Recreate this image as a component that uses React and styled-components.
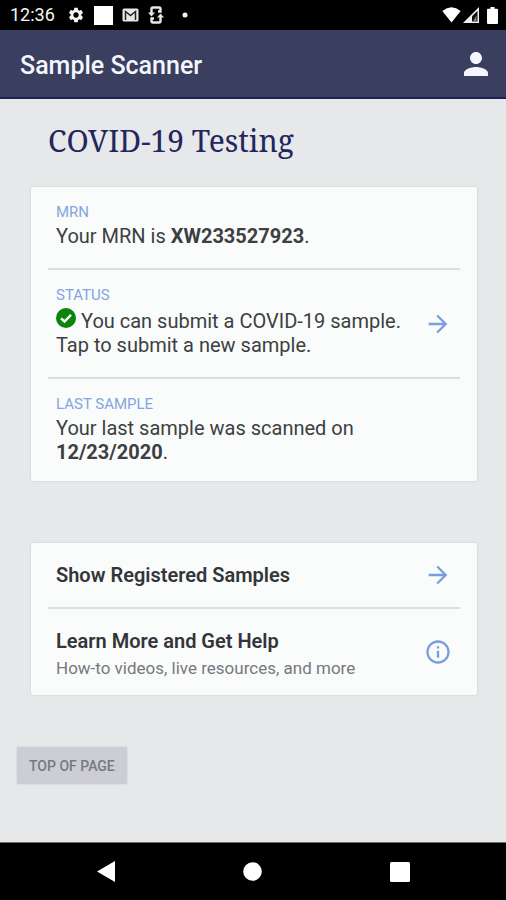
import React from 'react'
import styled, { createGlobalStyle } from 'styled-components'
import {
  MdSettings,
  MdPerson,
  MdArrowForward,
  MdInfoOutline,
} from 'react-icons/md'

const GlobalStyle = createGlobalStyle`
  * {
    box-sizing: border-box;
  }
  body {
    margin: 0;
    background: #e6e8ea;
    font-family: Roboto, "Liberation Sans", sans-serif;
  }
  h1, h2, h3, p {
    margin: 0;
  }
`;

const Screen = styled.div`
  display: flex;
  flex-direction: column;
  min-height: 100vh;
  background: #e6e8ea;
`;

const StatusBar = styled.div`
  display: flex;
  justify-content: space-between;
  align-items: center;
  height: 30px;
  padding: 0 8px 0 10px;
  background: #000;
  color: #f5f5f5;
`;

const StatusGroup = styled.div`
  display: flex;
  align-items: center;
  gap: ${(props) => props.$gap};
  svg {
    display: block;
  }
`;

const Clock = styled.span`
  margin-right: 3px;
  font-size: 18px;
  line-height: 30px;
`;

const Header = styled.header`
  display: flex;
  justify-content: space-between;
  align-items: center;
  height: 69px;
  padding: 0 12px 0 20px;
  background: #3a3f5f;
  border-bottom: 2px solid #1c2159;
  color: #f3f6fc;
`;

const AppName = styled.h1`
  padding-top: 4px;
  font-size: 25px;
  font-weight: 500;
  line-height: 32px;
`;

const IconButton = styled.button`
  display: flex;
  padding: 0;
  border: 0;
  background: none;
  color: inherit;
  font-size: 36px;
  cursor: pointer;
`;

const Main = styled.main`
  flex: 1;
  padding: 22px 29px 56px 31px;
`;

const PageTitle = styled.h2`
  margin: 0 17px 26px;
  color: #23265c;
  font-family: "Noto Serif", "Liberation Serif", serif;
  font-size: 30px;
  font-weight: 400;
  line-height: 40px;
`;

const Card = styled.section`
  margin-bottom: ${(props) => props.$space};
  padding: 0 17px;
  background: #fafbfb;
  border-radius: 2px;
  box-shadow: 0 0 2px #c3c6cc;
`;

const Row = styled.div`
  display: flex;
  justify-content: space-between;
  align-items: center;
  padding: ${(props) => props.$pad} 8px;
  border-bottom: 2px solid #dcdfe1;
  color: #3d3f42;
  text-decoration: none;
  &:last-child {
    border-bottom: 0;
  }
  > svg {
    flex-shrink: 0;
    color: #779fdc;
    font-size: 28px;
  }
`;

const RowBody = styled.div`
  padding: ${(props) => props.$pad || 0};
`;

const Label = styled.h3`
  margin-bottom: 2px;
  color: #84a5df;
  font-size: 15px;
  font-weight: 400;
  line-height: 20px;
  text-transform: uppercase;
`;

const Text = styled.p`
  font-size: 20px;
  line-height: 24px;
  b {
    font-weight: 700;
  }
  svg {
    margin: 1px 5px 0 0;
    vertical-align: 0;
  }
`;

const RowTitle = styled.h3`
  color: #333538;
  font-size: 20px;
  font-weight: 600;
  line-height: 24px;
`;

const Note = styled.p`
  margin-top: 3px;
  color: #77797c;
  font-size: 17px;
  line-height: 24px;
`;

const TopButton = styled.button`
  height: 37px;
  margin-left: -14px;
  padding: 0 12px;
  border: 0;
  border-radius: 2px;
  background: #cdced5;
  color: #77797f;
  box-shadow: 0 0 2px #c3c6cc;
  font-family: inherit;
  font-size: 14px;
  font-weight: 500;
  text-transform: uppercase;
  cursor: pointer;
`;

const NavBar = styled.nav`
  display: grid;
  grid-template-columns: repeat(3, 1fr);
  height: 58px;
  padding: 0 33px;
  background: #000;
  border-top: 1px solid #6d6e6f;
`;

const NavButton = styled.button`
  display: flex;
  justify-content: center;
  align-items: center;
  padding: 0;
  border: 0;
  background: none;
  cursor: pointer;
`;

const MailIcon = () => (
  <svg width="17" height="14" viewBox="0 0 17 14">
    <rect x="0.5" y="0.5" width="16" height="13" rx="1.5" fill="#e8e8e8" />
    <path d="M3.5 12V3.5L8.5 7.5L13.5 3.5V12" fill="none" stroke="#222" strokeWidth="1.5" />
  </svg>
)

const RotateIcon = () => (
  <svg width="16" height="18" viewBox="0 0 16 18" fill="none" stroke="#e8e8e8">
    <path d="M3.5 7V3Q3.5 1.5 5 1.5H11Q12.5 1.5 12.5 3V5.5H10" strokeWidth="2.4" />
    <path d="M12.5 11V15Q12.5 16.5 11 16.5H5Q3.5 16.5 3.5 15V12.5H6" strokeWidth="2.4" />
    <path d="M0 6.5H7L3.5 10.5ZM9 11.5H16L12.5 7.5Z" fill="#e8e8e8" stroke="none" />
  </svg>
)

const WifiIcon = () => (
  <svg width="19" height="16" viewBox="0 0 19 16">
    <path d="M0.3 4Q9.5 -3.4 18.7 4L9.5 15.5Z" fill="#fff" />
  </svg>
)

const SignalIcon = () => (
  <svg width="16" height="16" viewBox="0 0 16 16">
    <path d="M0 16L16 0V16Z" fill="#f0f0f0" />
    <path d="M14.5 3.8V14.5H9V9.3Z" fill="#111" />
    <path d="M10 14.5L13.5 8.5V14.5Z" fill="#888" />
  </svg>
)

const BatteryIcon = () => (
  <svg width="11" height="17" viewBox="0 0 11 17">
    <path d="M3.5 0H7.5V1.8H10Q11 1.8 11 2.8V16Q11 17 10 17H1Q0 17 0 16V2.8Q0 1.8 1 1.8H3.5Z" fill="#fff" />
  </svg>
)

const CheckIcon = () => (
  <svg width="20" height="20" viewBox="0 0 20 20">
    <circle cx="10" cy="10" r="10" fill="#0b840b" />
    <path d="M5 10.3L8.5 13.5L15 6.8" fill="none" stroke="#fff" strokeWidth="2.4" />
  </svg>
)

function App() {
  return (
    <Screen id="top">
      <GlobalStyle />
      <StatusBar>
        <StatusGroup $gap="9px">
          <Clock>12:36</Clock>
          <MdSettings size={18} />
          <svg width="19" height="19"><rect width="19" height="19" fill="#fff" /></svg>
          <MailIcon />
          <RotateIcon />
          <svg width="22" height="6"><circle cx="12" cy="3" r="2.5" fill="#f5f5f5" /></svg>
        </StatusGroup>
        <StatusGroup $gap="2px">
          <WifiIcon />
          <SignalIcon />
          <svg width="4" height="1" />
          <BatteryIcon />
        </StatusGroup>
      </StatusBar>

      <Header>
        <AppName>Sample Scanner</AppName>
        <IconButton type="button" aria-label="Profile">
          <MdPerson />
        </IconButton>
      </Header>

      <Main>
        <PageTitle>COVID-19 Testing</PageTitle>
        <Card $space="62px">
          <Row $pad="15px">
            <RowBody $pad="0 0 5px">
              <Label>MRN</Label>
              <Text>Your MRN is <b>XW233527923</b>.</Text>
            </RowBody>
          </Row>
          <Row as="a" href="#submit" $pad="15px">
            <RowBody $pad="0 0 5px">
              <Label>Status</Label>
              <Text>
                <CheckIcon />
                You can submit a COVID-19 sample.
                <br />
                Tap to submit a new sample.
              </Text>
            </RowBody>
            <MdArrowForward />
          </Row>
          <Row $pad="15px">
            <RowBody $pad="0 0 2px">
              <Label>Last Sample</Label>
              <Text>Your last sample was scanned on <b>12/23/2020</b>.</Text>
            </RowBody>
          </Row>
        </Card>

        <Card $space="52px">
          <Row as="a" href="#samples" $pad="18px">
            <RowTitle>Show Registered Samples</RowTitle>
            <MdArrowForward />
          </Row>
          <Row as="a" href="#help" $pad="15px">
            <RowBody $pad="5px 0 0">
              <RowTitle>Learn More and Get Help</RowTitle>
              <Note>How-to videos, live resources, and more</Note>
            </RowBody>
            <MdInfoOutline />
          </Row>
        </Card>

        <TopButton type="button" onClick={() => window.scrollTo(0, 0)}>
          Top of page
        </TopButton>
      </Main>

      <NavBar>
        <NavButton type="button" aria-label="Back">
          <svg width="18" height="21" viewBox="0 0 18 21"><path d="M0 10.5L18 0V21Z" fill="#fff" /></svg>
        </NavButton>
        <NavButton type="button" aria-label="Home">
          <svg width="19" height="19" viewBox="0 0 19 19"><circle cx="9.5" cy="9.5" r="9.3" fill="#fff" /></svg>
        </NavButton>
        <NavButton type="button" aria-label="Recent apps">
          <svg width="20" height="20" viewBox="0 0 20 20"><rect width="20" height="20" rx="1.5" fill="#fff" /></svg>
        </NavButton>
      </NavBar>
    </Screen>
  )
}

export default App
